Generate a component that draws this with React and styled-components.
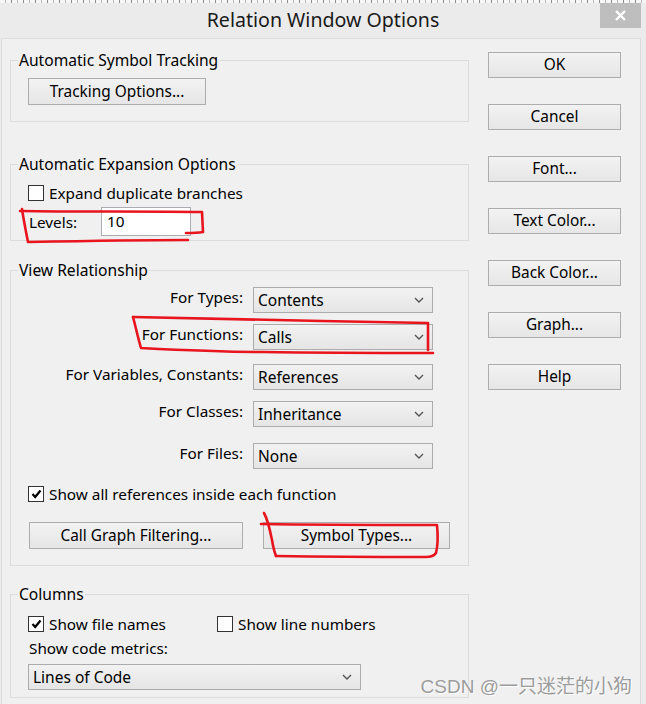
import React from 'react';
import styled, { createGlobalStyle } from 'styled-components';

const GlobalStyle = createGlobalStyle`
  html, body {
    margin: 0;
    padding: 0;
    background: #ebebeb;
  }

  body {
    font-family: "Noto Sans", "Open Sans", "Noto Sans CJK SC", sans-serif;
    color: #000;
  }
`;

const SIDE_BUTTONS = ['OK', 'Cancel', 'Font...', 'Text Color...', 'Back Color...', 'Graph...', 'Help'];

const RELATIONS = [
  { label: 'For Types:', value: 'Contents', top: 0 },
  { label: 'For Functions:', value: 'Calls', top: 11 },
  { label: 'For Variables, Constants:', value: 'References', top: 14 },
  { label: 'For Classes:', value: 'Inheritance', top: 11 },
  { label: 'For Files:', value: 'None', top: 16 },
];

const Chevron = () => (
  <svg width="10" height="6" viewBox="0 0 10 6">
    <path d="M1 1 L5 5 L9 1" fill="none" stroke="#555" strokeWidth="1.4" />
  </svg>
);

const CheckMark = () => (
  <svg width="11" height="10" viewBox="0 0 11 10">
    <path d="M1.5 5 L4.2 8 L9.5 1.5" fill="none" stroke="#000" strokeWidth="2.2" />
  </svg>
);

const CheckBox = ({ checked, label }) => (
  <CheckRow>
    <Box>{checked && <CheckMark />}</Box>
    <span>{label}</span>
  </CheckRow>
);

const Select = ({ value, width }) => (
  <SelectBox $width={width}>
    <span>{value}</span>
    <Chevron />
  </SelectBox>
);

const App = () => {
  return (
    <Window>
      <GlobalStyle />
      <TopStrip />
      <TitleBar>
        <span />
        <Title>Relation Window Options</Title>
        <CloseButton>
          <svg width="13" height="13" viewBox="0 0 13 13">
            <path d="M2 2 L11 11 M11 2 L2 11" stroke="#fff" strokeWidth="2.4" />
          </svg>
        </CloseButton>
      </TitleBar>

      <Client>
        <LeftColumn>
          <Group $height={73} $top={0}>
            <GroupTitle>Automatic Symbol Tracking</GroupTitle>
            <PushButton $width={178}>Tracking Options...</PushButton>
          </Group>

          <Group $height={88} $top={31}>
            <GroupTitle>Automatic Expansion Options</GroupTitle>
            <CheckBox label="Expand duplicate branches" />
            <LevelsRow>
              <LevelsLabel>Levels:</LevelsLabel>
              <TextInput>10</TextInput>
            </LevelsRow>
          </Group>

          <Group $height={307} $top={18} $padTop={6}>
            <GroupTitle>View Relationship</GroupTitle>
            {RELATIONS.map((row) => (
              <FieldRow key={row.label} $top={row.top}>
                <FieldLabel>{row.label}</FieldLabel>
                <Select value={row.value} width={180} />
              </FieldRow>
            ))}
            <Spacer $h={14} />
            <CheckBox checked label="Show all references inside each function" />
            <ButtonRow>
              <PushButton $width={214}>Call Graph Filtering...</PushButton>
              <PushButton $width={187}>Symbol Types...</PushButton>
            </ButtonRow>
          </Group>

          <Group $height={115} $top={17}>
            <GroupTitle>Columns</GroupTitle>
            <ColumnsRow>
              <ColumnsCell>
                <CheckBox checked label="Show file names" />
              </ColumnsCell>
              <CheckBox label="Show line numbers" />
            </ColumnsRow>
            <MetricsLabel>Show code metrics:</MetricsLabel>
            <Select value="Lines of Code" width={333} />
          </Group>
        </LeftColumn>

        <ButtonColumn>
          {SIDE_BUTTONS.map((text) => (
            <PushButton key={text} $width={133} $height={26}>
              {text}
            </PushButton>
          ))}
        </ButtonColumn>
      </Client>

      <Marks width="646" height="704" viewBox="0 0 646 704">
        <path d="M20 211 C80 212 150 211 202 212 L203 232 C197 233 192 233 186 233" />
        <path d="M22 209 C24 222 26 232 28 242 C80 241 140 240 188 240" />
        <path d="M133 317 C200 319 330 321 428 323 L428 350" />
        <path d="M133 317 C136 328 138 338 141 348 C180 350 230 352 262 352 C330 353 390 353 433 353" />
        <path d="M264 513 C268 520 270 530 272 540 C273 546 274 551 276 556" />
        <path d="M261 524 C320 525 390 525 437 525 C438 535 438 545 436 553 C434 556 430 557 426 557 C380 557 340 557 276 556" />
      </Marks>

      <Watermark>CSDN @一只迷茫的小狗</Watermark>
    </Window>
  );
};

const Window = styled.div`
  position: relative;
  width: 646px;
  height: 704px;

  display: flex;
  flex-direction: column;

  background: #ebebeb;
  overflow: hidden;
`;

const TopStrip = styled.div`
  height: 3px;
  background: repeating-linear-gradient(
    90deg,
    #f6f6f6 0 5px,
    #b9b9b9 5px 6px,
    #f6f6f6 6px 11px,
    #8c8c8c 11px 12px
  );
`;

const TitleBar = styled.div`
  height: 35px;

  display: grid;
  grid-template-columns: 1fr auto 1fr;
  align-items: center;
`;

const Title = styled.div`
  padding-bottom: 2px;
  font-size: 19.6px;
  line-height: 26px;
  color: #1a1a1a;
`;

const CloseButton = styled.div`
  width: 41px;
  height: 25px;
  margin-right: 5px;

  display: flex;
  align-items: center;
  justify-content: center;
  justify-self: end;
  align-self: start;

  background: #bebebe;
`;

const Client = styled.div`
  flex: 1;
  margin: 0 5px 0 1px;

  display: flex;
  gap: 19px;

  background: #f0f0f0;
  border-top: 1px solid #dcdcdc;
  border-left: 1px solid #dcdcdc;
  border-right: 1px solid #dcdcdc;
  font-size: 15.3px;
  line-height: 22px;
`;

const LeftColumn = styled.div`
  width: 459px;
  padding: 10px 0 0 8px;

  display: flex;
  flex-direction: column;
`;

const Group = styled.fieldset`
  box-sizing: border-box;
  height: ${({ $height }) => $height}px;
  margin: ${({ $top }) => $top}px 0 0;
  padding: ${({ $padTop }) => $padTop ?? 7}px 0 0 17px;
  min-width: 0;

  display: flex;
  flex-direction: column;
  align-items: flex-start;

  border: 1px solid #dcdcdc;
`;

const GroupTitle = styled.legend`
  margin-left: -10px;
  padding: 0 1px;
  line-height: 22px;
  font-size: 15.6px;
`;

const PushButton = styled.div`
  box-sizing: border-box;
  width: ${({ $width }) => $width}px;
  height: ${({ $height }) => $height ?? 27}px;

  display: flex;
  align-items: center;
  justify-content: center;

  background: linear-gradient(#f2f2f2, #e6e6e6);
  border: 1px solid #adadad;
  font-size: 15.4px;
`;

const CheckRow = styled.div`
  height: 22px;

  display: flex;
  gap: 5px;
  align-items: center;

  white-space: nowrap;
`;

const Box = styled.div`
  box-sizing: border-box;
  width: 16px;
  height: 16px;

  display: flex;
  align-items: center;
  justify-content: center;

  background: #fff;
  border: 1px solid #333;
`;

const LevelsRow = styled.div`
  margin-top: 3px;

  display: flex;
  align-items: center;
`;

const LevelsLabel = styled.span`
  width: 72px;
  padding-left: 1px;
`;

const TextInput = styled.div`
  box-sizing: border-box;
  width: 90px;
  height: 29px;
  padding: 2px 5px 0;

  background: #fff;
  border: 1px solid #abadb3;
`;

const FieldRow = styled.div`
  height: 26px;
  margin-top: ${({ $top }) => $top}px;

  display: flex;
  gap: 10px;
  align-items: center;
`;

const FieldLabel = styled.span`
  width: 215px;
  padding-bottom: 6px;
  text-align: right;
  white-space: nowrap;
`;

const SelectBox = styled.div`
  box-sizing: border-box;
  width: ${({ $width }) => $width}px;
  height: 26px;
  padding: 0 8px 0 4px;

  display: flex;
  align-items: center;
  justify-content: space-between;

  background: linear-gradient(#f2f2f2, #e5e5e5);
  border: 1px solid #acacac;
  font-size: 15.5px;
`;

const Spacer = styled.div`
  height: ${({ $h }) => $h}px;
`;

const ButtonRow = styled.div`
  margin-top: 17px;
  padding-left: 1px;

  display: flex;
  gap: 20px;
`;

const ColumnsRow = styled.div`
  margin-top: 1px;
  display: flex;
`;

const ColumnsCell = styled.div`
  width: 189px;
`;

const MetricsLabel = styled.div`
  margin-top: 2px;
  padding-left: 1px;
  line-height: 22px;
  margin-bottom: 5px;
`;

const ButtonColumn = styled.div`
  padding-top: 13px;

  display: flex;
  flex-direction: column;
  gap: 26px;
`;

const Marks = styled.svg`
  position: absolute;
  top: 0;
  left: 0;
  pointer-events: none;

  path {
    fill: none;
    stroke: #e8141e;
    stroke-width: 2.6;
    stroke-linecap: round;
    stroke-linejoin: round;
  }
`;

const Watermark = styled.div`
  position: absolute;
  right: 14px;
  bottom: 6px;

  font-size: 19px;
  color: #9c9c9c;
  text-shadow: 1px 1px 0 #fff;
  font-family: "Liberation Sans", "Noto Sans CJK SC", sans-serif;
`;

export default App;
